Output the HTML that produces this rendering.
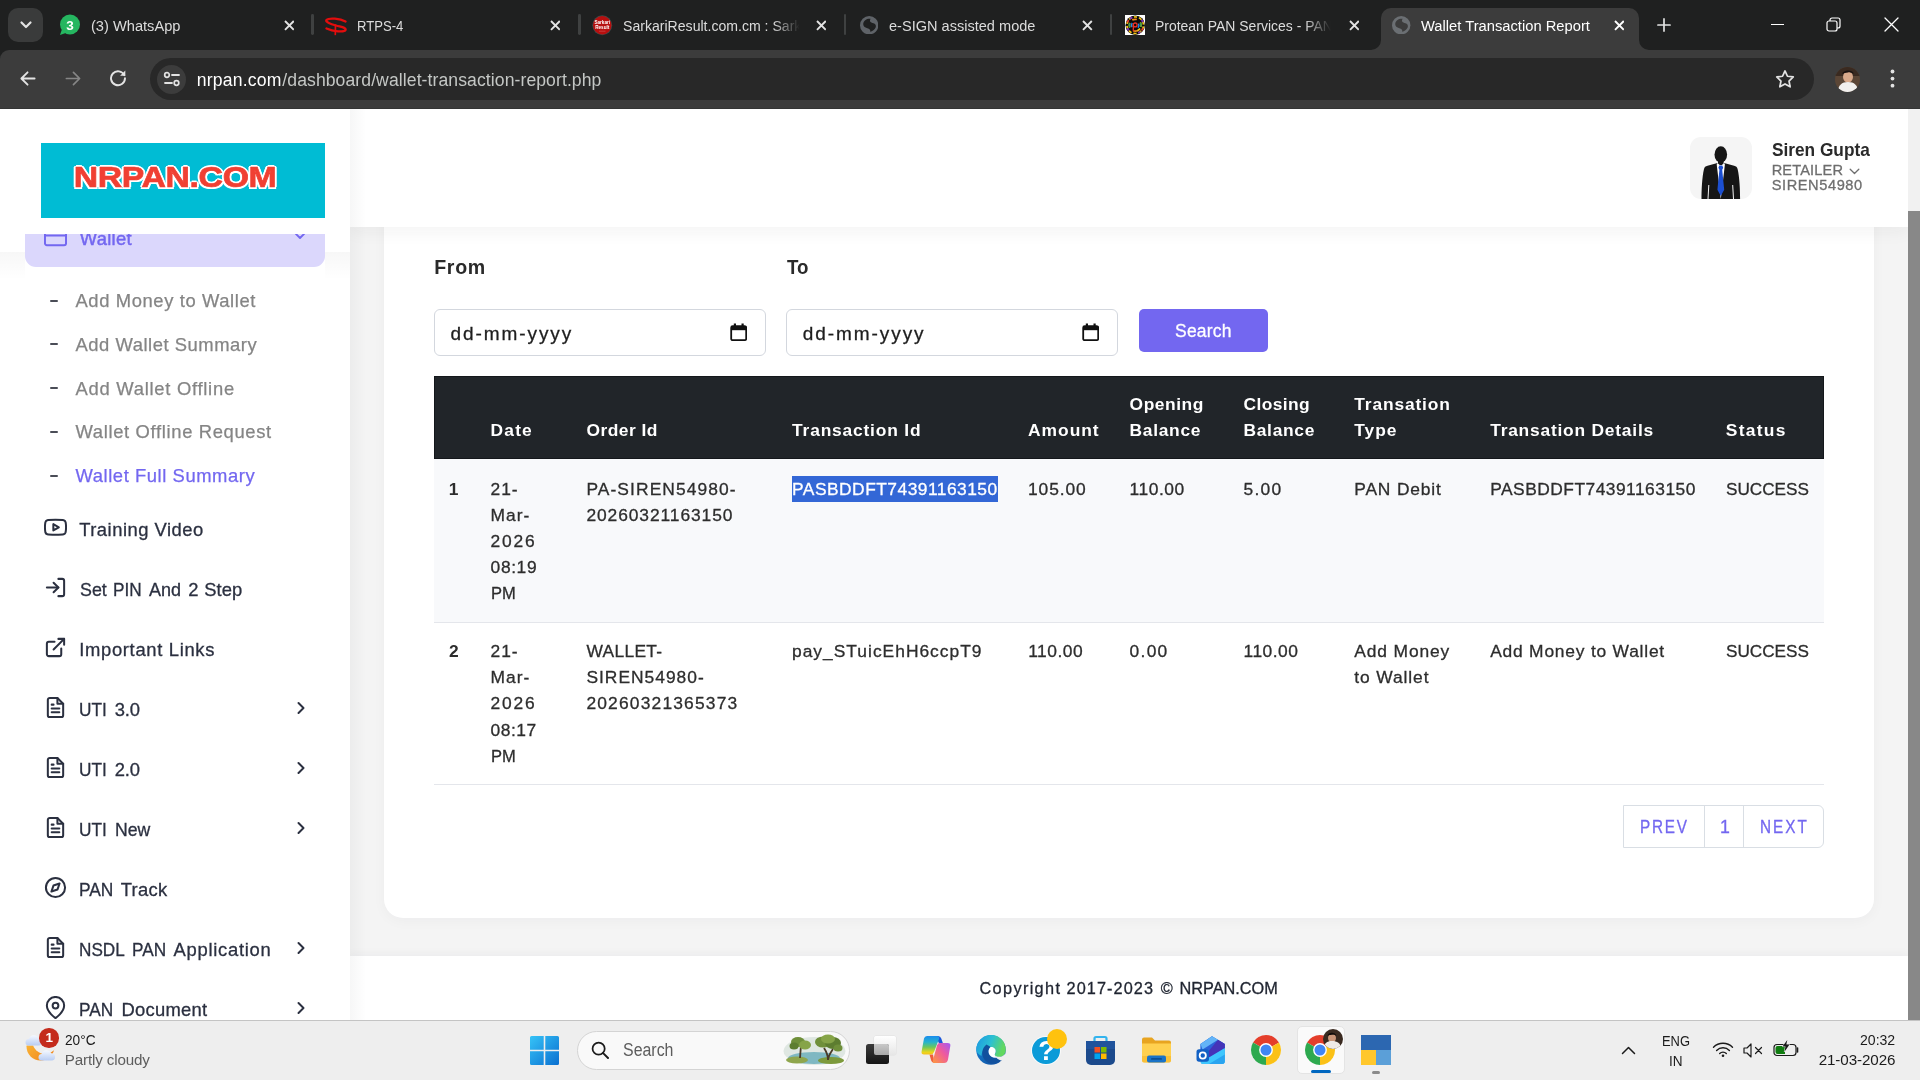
<!DOCTYPE html>
<html lang="en">
<head>
<meta charset="utf-8">
<title>Wallet Transaction Report</title>
<style>
*{box-sizing:border-box;margin:0;padding:0}
html,body{width:1920px;height:1080px;overflow:hidden;background:#fff;font-family:"Liberation Sans",sans-serif;}
.abs{position:absolute}
.tx{position:absolute;white-space:pre}
#root{position:relative;width:1920px;height:1080px;overflow:hidden;opacity:.999}
#tabstrip{left:0;top:0;width:1920px;height:50px;background:#1f2020;box-shadow:0 12px 0 #1f2020}
#toolbar{left:0;top:50px;width:1920px;height:59px;background:#3c3c3c;border-radius:9px 0 0 0;box-shadow:inset 0 -1px 0 #343535}
#page{left:0;top:109px;width:1908px;height:911px;background:#f4f4f4;overflow:hidden}
#sidebar{left:0;top:0;width:350px;height:911px;background:#fff;overflow:hidden}
#sbshadow{left:350px;top:0;width:16px;height:911px;background:linear-gradient(to right,rgba(34,41,47,.04),rgba(34,41,47,0))}
#header{left:350px;top:0;width:1558px;height:118px;background:#fff;box-shadow:0 5px 16px rgba(34,41,47,.05)}
#card{left:384px;top:100px;width:1490px;height:709px;background:#fff;border-radius:0 0 19px 19px;box-shadow:0 3px 14px rgba(34,41,47,.035)}
#footer{left:350px;top:847px;width:1558px;height:64px;background:#fff;box-shadow:0 -3px 8px rgba(34,41,47,.035)}
#scroll{left:1908px;top:109px;width:12px;height:911px;background:#f1f1f1}
#thumb{left:0;top:102px;width:12px;height:809px;background:#888}
#taskbar{left:0;top:1020px;width:1920px;height:60px;background:#eeeeee;box-shadow:inset 0 1px 0 #c4c4c4}
</style>
</head>
<body>
<div id="root">
<!-- ===== CHROME ===== -->
<div id="tabstrip" class="abs">
<div class="abs" style="left:8px;top:8px;width:35px;height:34px;background:#3a3b3b;border-radius:10px;"></div>
<svg class="abs" style="left:19px;top:20px;" width="14" height="10" viewBox="0 0 14 10"><path d="M2.500 2.500L7 7 11.500 2.500" stroke="#e3e3e3" stroke-width="2.200" fill="none" stroke-linecap="round" stroke-linejoin="round"/></svg>
<svg class="abs" style="left:59px;top:14px;" width="22" height="22" viewBox="0 0 22 22"><circle cx="11" cy="10.500" r="10" fill="#25b660"/><path d="M1 21l2.200-6.500 4.300 4.300z" fill="#25b660"/><text x="11" y="15.500" font-family="Liberation Sans,sans-serif" font-weight="bold" font-size="13.500" fill="#fff" text-anchor="middle">3</text></svg>
<div class="tx" style="left:90.50px;top:16px;font-size:15.4px;line-height:19px;letter-spacing:0.000px;color:#dcdcdc;transform:scaleX(0.9507);transform-origin:0 0;">(3) WhatsApp</div>
<svg class="abs" style="left:283.6px;top:19.9px;" width="10.8" height="10.8" viewBox="-5.4 -5.4 10.8 10.8"><path d="M-4.4 -4.4L4.4 4.4M4.4 -4.4L-4.4 4.4" stroke="#e3e3e3" stroke-width="1.9" stroke-linecap="butt" fill="none"/></svg>
<div class="abs" style="left:311.1px;top:14px;width:2.8px;height:21px;background:#3f4141;border-radius:1.4px;"></div>
<svg class="abs" style="left:325px;top:17px;" width="22" height="19" viewBox="0 0 22 19"><path d="M20.500 4.500C15 1.500 4 .5 1.500 3 0 5 6 7 11 8.500c5 1.500 10.500 2 9.500 4.500-1 2.500-12.500 1.500-19-1.500" fill="none" stroke="#e30d0d" stroke-width="2.300" stroke-linecap="round"/><path d="M10.500 8L10.300 17.500" stroke="#e30d0d" stroke-width="1.700" stroke-linecap="round"/></svg>
<div class="tx" style="left:356.50px;top:16px;font-size:15.4px;line-height:19px;letter-spacing:0.000px;color:#dcdcdc;transform:scaleX(0.8497);transform-origin:0 0;">RTPS-4</div>
<svg class="abs" style="left:549.6px;top:19.9px;" width="10.8" height="10.8" viewBox="-5.4 -5.4 10.8 10.8"><path d="M-4.4 -4.4L4.4 4.4M4.4 -4.4L-4.4 4.4" stroke="#e3e3e3" stroke-width="1.9" stroke-linecap="butt" fill="none"/></svg>
<div class="abs" style="left:578.1px;top:14px;width:2.8px;height:21px;background:#3f4141;border-radius:1.4px;"></div>
<svg class="abs" style="left:592px;top:15px;" width="20.5" height="20.5" viewBox="0 0 20.500 20.500"><circle cx="10.250" cy="10.250" r="9.900" fill="#3f4a4a"/><circle cx="10.250" cy="10.250" r="9.200" fill="#b70f0f"/><text x="10.250" y="9.300" font-family="Liberation Sans,sans-serif" font-weight="bold" font-size="4.600" fill="#fff" text-anchor="middle">Sarkari</text><text x="10.250" y="13.800" font-family="Liberation Sans,sans-serif" font-weight="bold" font-size="4.600" fill="#fff" text-anchor="middle">Result</text><path d="M7 16.200h6.500" stroke="#d46a6a" stroke-width=".5"/></svg>
<div class="tx" style="left:622.50px;top:16px;font-size:15.4px;line-height:19px;letter-spacing:0.000px;color:#dcdcdc;-webkit-mask-image:linear-gradient(to right,#000 84%,transparent 99%);mask-image:linear-gradient(to right,#000 84%,transparent 99%);transform:scaleX(0.9149);transform-origin:0 0;">SarkariResult.com.cm : Sark</div>
<svg class="abs" style="left:815.6px;top:19.9px;" width="10.8" height="10.8" viewBox="-5.4 -5.4 10.8 10.8"><path d="M-4.4 -4.4L4.4 4.4M4.4 -4.4L-4.4 4.4" stroke="#e3e3e3" stroke-width="1.9" stroke-linecap="butt" fill="none"/></svg>
<div class="abs" style="left:843.6px;top:14px;width:2.8px;height:21px;background:#3f4141;border-radius:1.4px;"></div>
<svg class="abs" style="left:859.5999999999999px;top:15.8px;" width="18.4" height="18.4" viewBox="-10 -10 20 20"><circle r="10" fill="#5f6368"/><path d="M-6.500 -1C-6.500 -5.500-2-7.500 1.500-7c-1.500 2.500-.5 4 2 4.500 3 .5 4.500 2.500 3.500 5C6 5 3.500 6.800 1 7c.8-2-.8-3.200-3-3.800C-4.800 2.500-6.500 1-6.500-1Z" fill="#1f2020"/></svg>
<div class="tx" style="left:888.50px;top:16px;font-size:15.4px;line-height:19px;letter-spacing:0.000px;color:#dcdcdc;transform:scaleX(0.9457);transform-origin:0 0;">e-SIGN assisted mode</div>
<svg class="abs" style="left:1082.1px;top:19.9px;" width="10.8" height="10.8" viewBox="-5.4 -5.4 10.8 10.8"><path d="M-4.4 -4.4L4.4 4.4M4.4 -4.4L-4.4 4.4" stroke="#e3e3e3" stroke-width="1.9" stroke-linecap="butt" fill="none"/></svg>
<div class="abs" style="left:1109.6px;top:14px;width:2.8px;height:21px;background:#3f4141;border-radius:1.4px;"></div>
<svg class="abs" style="left:1124.8px;top:14.7px;" width="20.4" height="20.4" viewBox="-10.200 -10.200 20.400 20.400"><rect x="-10.200" y="-10.200" width="20.400" height="20.400" fill="#fff"/><circle r="9.700" fill="#0a0a0a"/><circle r="8.300" fill="none" stroke="#f5c518" stroke-width="1.700" stroke-dasharray="3.200 2" transform="rotate(8)"/><circle r="8.300" fill="none" stroke="#7a2fbf" stroke-width="1.700" stroke-dasharray="2.600 10.440" transform="rotate(-40)"/><circle r="8.300" fill="none" stroke="#e8372c" stroke-width="1.700" stroke-dasharray="2.600 23.480" transform="rotate(200)"/><circle r="5.900" fill="none" stroke="#f58a1f" stroke-width="1.700" stroke-dasharray="4.600 4.670" transform="rotate(-120)"/><circle r="5.900" fill="none" stroke="#2fa84f" stroke-width="1.700" stroke-dasharray="4 14.530" transform="rotate(-25)"/><circle r="5.900" fill="none" stroke="#f5c518" stroke-width="1.700" stroke-dasharray="3.500 33.570" transform="rotate(35)"/><circle r="3.700" fill="none" stroke="#1d8fe8" stroke-width="1.500" stroke-dasharray="4.200 7.420" transform="rotate(150)"/><circle cx="0" cy="-.3" r="1.900" fill="none" stroke="#ee2f24" stroke-width="1.300"/><path d="M-1.900 -.3V5.500" stroke="#ee2f24" stroke-width="1.300" stroke-linecap="round"/></svg>
<div class="tx" style="left:1155.00px;top:16px;font-size:15.4px;line-height:19px;letter-spacing:0.000px;color:#dcdcdc;-webkit-mask-image:linear-gradient(to right,#000 84%,transparent 99%);mask-image:linear-gradient(to right,#000 84%,transparent 99%);transform:scaleX(0.9069);transform-origin:0 0;">Protean PAN Services - PAN</div>
<svg class="abs" style="left:1348.6px;top:19.9px;" width="10.8" height="10.8" viewBox="-5.4 -5.4 10.8 10.8"><path d="M-4.4 -4.4L4.4 4.4M4.4 -4.4L-4.4 4.4" stroke="#e3e3e3" stroke-width="1.9" stroke-linecap="butt" fill="none"/></svg>
<div class="abs" style="left:1381px;top:7.5px;width:257.5px;height:42.5px;background:#3c3c3c;border-radius:10px 10px 0 0;"></div>
<svg class="abs" style="left:1371px;top:40px;" width="10" height="10" viewBox="0 0 10 10"><path d="M10 0v10H0A10 10 0 0 0 10 0z" fill="#3c3c3c"/></svg>
<svg class="abs" style="left:1638.5px;top:40px;" width="10" height="10" viewBox="0 0 10 10"><path d="M0 0v10h10A10 10 0 0 1 0 0z" fill="#3c3c3c"/></svg>
<svg class="abs" style="left:1392.3px;top:15.8px;" width="18.4" height="18.4" viewBox="-10 -10 20 20"><circle r="10" fill="#6b6f73"/><path d="M-6.500 -1C-6.500 -5.500-2-7.500 1.500-7c-1.500 2.500-.5 4 2 4.500 3 .5 4.500 2.500 3.500 5C6 5 3.500 6.800 1 7c.8-2-.8-3.200-3-3.800C-4.800 2.500-6.500 1-6.500-1Z" fill="#3c3c3c"/></svg>
<div class="tx" style="left:1421.00px;top:16px;font-size:15.4px;line-height:19px;letter-spacing:0.000px;color:#ffffff;transform:scaleX(0.9569);transform-origin:0 0;">Wallet Transaction Report</div>
<svg class="abs" style="left:1613.6px;top:19.9px;" width="10.8" height="10.8" viewBox="-5.4 -5.4 10.8 10.8"><path d="M-4.4 -4.4L4.4 4.4M4.4 -4.4L-4.4 4.4" stroke="#ffffff" stroke-width="1.9" stroke-linecap="butt" fill="none"/></svg>
<svg class="abs" style="left:1656.5px;top:18px;" width="14" height="14" viewBox="0 0 15 15"><path d="M7.500 1v13M1 7.500h13" stroke="#e3e3e3" stroke-width="1.800" stroke-linecap="round"/></svg>
<div class="abs" style="left:1771px;top:23.5px;width:13px;height:1.3px;background:#ffffff;"></div>
<svg class="abs" style="left:1826px;top:17px;" width="15" height="15" viewBox="0 0 15 15"><rect x="1" y="4" width="10" height="10" rx="2" fill="none" stroke="#fff" stroke-width="1.200"/><path d="M4 4V3a2 2 0 0 1 2-2h6a2 2 0 0 1 2 2v6a2 2 0 0 1-2 2h-1" fill="none" stroke="#fff" stroke-width="1.200"/></svg>
<svg class="abs" style="left:1883.5px;top:17px;" width="15" height="15" viewBox="0 0 15 15"><path d="M1 1l13 13M14 1L1 14" stroke="#fff" stroke-width="1.300" stroke-linecap="round"/></svg>
</div>
<div id="toolbar" class="abs">
<svg class="abs" style="left:19.5px;top:21px;" width="16" height="15" viewBox="0 0 18 17"><path d="M16.500 8.500H2M8.500 1.500L1.500 8.500l7 7" fill="none" stroke="#e3e3e3" stroke-width="2.100" stroke-linecap="round" stroke-linejoin="round"/></svg>
<svg class="abs" style="left:64.5px;top:21px;" width="16" height="15" viewBox="0 0 18 17"><path d="M1.500 8.500H16M9.500 1.500l7 7-7 7" fill="none" stroke="#868686" stroke-width="1.900" stroke-linecap="round" stroke-linejoin="round"/></svg>
<svg class="abs" style="left:108.5px;top:19px;" width="18" height="18" viewBox="0 0 18 18"><path d="M15.300 6.200A7 7 0 1 0 16 9.300" fill="none" stroke="#e3e3e3" stroke-width="1.900" stroke-linecap="round"/><path d="M16.300 1.500v5.200h-5.200z" fill="#e3e3e3"/></svg>
<div class="abs" style="left:150px;top:8px;width:1663.5px;height:42px;background:#282828;border-radius:21px;"></div>
<div class="abs" style="left:156.5px;top:14.5px;width:29.5px;height:29.5px;background:#3c3c3c;border-radius:50%;"></div>
<svg class="abs" style="left:162.5px;top:21px;" width="18" height="16" viewBox="0 0 18 16"><circle cx="4" cy="4" r="2.300" fill="none" stroke="#e3e3e3" stroke-width="1.700"/><path d="M9 4h7" stroke="#e3e3e3" stroke-width="1.800" stroke-linecap="round"/><circle cx="13.500" cy="12" r="2.300" fill="none" stroke="#e3e3e3" stroke-width="1.700"/><path d="M2 12h7" stroke="#e3e3e3" stroke-width="1.800" stroke-linecap="round"/></svg>
</div>
<div class="tx" style="left:196.70px;top:69px;font-size:17.6px;line-height:22px;letter-spacing:0.206px;color:#ffffff;">nrpan.com</div>
<div class="tx" style="left:282.30px;top:69px;font-size:17.6px;line-height:22px;letter-spacing:0.082px;color:#c4c7c5;">/dashboard/wallet-transaction-report.php</div>
<svg class="abs" style="left:1774px;top:68px;" width="22" height="22" viewBox="0 0 24 24"><path d="M12 3.200l2.700 5.800 6.300.8-4.600 4.400 1.200 6.300L12 17.400l-5.600 3.100 1.200-6.300L3 9.800l6.300-.8z" fill="none" stroke="#e3e3e3" stroke-width="1.900" stroke-linejoin="round"/></svg>
<svg class="abs" style="left:1835px;top:66.5px;" width="25" height="25" viewBox="0 0 25 25"><defs><clipPath id="pc"><circle cx="12.500" cy="12.500" r="12.500"/></clipPath></defs><g clip-path="url(#pc)"><rect width="25" height="25" fill="#5b4636"/><rect x="0" y="0" width="25" height="9" fill="#3a2a20"/><ellipse cx="13" cy="10" rx="5" ry="5.500" fill="#d9a98a"/><path d="M7 7c1-4 10-5 12 0-1-1-4-2-6-1.500S8 6 7 7z" fill="#1a1210"/><path d="M3 25c0-7 4-10 10-10s10 3 10 10z" fill="#f2f0ee"/></g></svg>
<svg class="abs" style="left:1890px;top:69px;" width="5" height="20" viewBox="0 0 5 20"><circle cx="2.500" cy="2.500" r="1.900" fill="#e3e3e3"/><circle cx="2.500" cy="9.600" r="1.900" fill="#e3e3e3"/><circle cx="2.500" cy="16.700" r="1.900" fill="#e3e3e3"/></svg>
<!-- ===== PAGE ===== -->
<div id="page" class="abs">
<div id="card" class="abs">
</div>
<div class="tx" style="left:434.20px;top:146px;font-size:19.6px;line-height:24px;letter-spacing:0.700px;color:#2a2a2a;font-weight:bold;">From</div>
<div class="tx" style="left:787.40px;top:146px;font-size:19.6px;line-height:24px;letter-spacing:0.000px;color:#2a2a2a;font-weight:bold;transform:scaleX(0.9560);transform-origin:0 0;">To</div>
<div class="abs" style="left:434px;top:200px;width:332px;height:47px;background:#fff;border:1px solid #d3d7de;border-radius:6px;"></div>
<div class="tx" style="left:450.40px;top:213px;font-size:19px;line-height:23px;letter-spacing:1.940px;color:#1e1e1e;-webkit-text-stroke:.3px #1e1e1e;">dd-mm-yyyy</div>
<svg class="abs" style="left:729.5px;top:214.3px;" width="17.5" height="18.5" viewBox="0 0 17.5 18.5"><rect x="1.200" y="3.200" width="15" height="14" rx="1.500" fill="none" stroke="#111" stroke-width="1.800"/><rect x="1.200" y="3.200" width="15" height="4" fill="#111"/><rect x="3.800" y=".5" width="2.200" height="3.500" fill="#111"/><rect x="11.500" y=".5" width="2.200" height="3.500" fill="#111"/></svg>
<div class="abs" style="left:786.3px;top:200px;width:332px;height:47px;background:#fff;border:1px solid #d3d7de;border-radius:6px;"></div>
<div class="tx" style="left:802.70px;top:213px;font-size:19px;line-height:23px;letter-spacing:1.940px;color:#1e1e1e;-webkit-text-stroke:.3px #1e1e1e;">dd-mm-yyyy</div>
<svg class="abs" style="left:1081.8px;top:214.3px;" width="17.5" height="18.5" viewBox="0 0 17.5 18.5"><rect x="1.200" y="3.200" width="15" height="14" rx="1.500" fill="none" stroke="#111" stroke-width="1.800"/><rect x="1.200" y="3.200" width="15" height="4" fill="#111"/><rect x="3.800" y=".5" width="2.200" height="3.500" fill="#111"/><rect x="11.500" y=".5" width="2.200" height="3.500" fill="#111"/></svg>
<div class="abs" style="left:1139px;top:200px;width:129px;height:43px;background:#7367f0;border-radius:5px;"></div>
<div class="tx" style="left:1175.00px;top:211px;font-size:17.5px;line-height:22px;letter-spacing:0.210px;color:#ffffff;-webkit-text-stroke:.3px #ffffff;">Search</div>
<div class="abs" style="left:434px;top:267px;width:1390px;height:83px;background:#212529;box-shadow:inset 0 0 0 1px #14171b;"></div>
<div class="tx" style="left:490.60px;top:310px;font-size:17.4px;line-height:22px;letter-spacing:1.162px;color:#ffffff;font-weight:bold;">Date</div>
<div class="tx" style="left:586.40px;top:310px;font-size:17.4px;line-height:22px;letter-spacing:0.474px;color:#ffffff;font-weight:bold;">Order Id</div>
<div class="tx" style="left:792.10px;top:310px;font-size:17.4px;line-height:22px;letter-spacing:0.811px;color:#ffffff;font-weight:bold;">Transaction Id</div>
<div class="tx" style="left:1028.00px;top:310px;font-size:17.4px;line-height:22px;letter-spacing:0.996px;color:#ffffff;font-weight:bold;">Amount</div>
<div class="tx" style="left:1129.60px;top:284px;font-size:17.4px;line-height:22px;letter-spacing:0.523px;color:#ffffff;font-weight:bold;">Opening</div>
<div class="tx" style="left:1129.60px;top:310px;font-size:17.4px;line-height:22px;letter-spacing:0.694px;color:#ffffff;font-weight:bold;">Balance</div>
<div class="tx" style="left:1243.50px;top:284px;font-size:17.4px;line-height:22px;letter-spacing:0.384px;color:#ffffff;font-weight:bold;">Closing</div>
<div class="tx" style="left:1243.50px;top:310px;font-size:17.4px;line-height:22px;letter-spacing:0.694px;color:#ffffff;font-weight:bold;">Balance</div>
<div class="tx" style="left:1354.30px;top:284px;font-size:17.4px;line-height:22px;letter-spacing:0.846px;color:#ffffff;font-weight:bold;">Transation</div>
<div class="tx" style="left:1354.30px;top:310px;font-size:17.4px;line-height:22px;letter-spacing:0.960px;color:#ffffff;font-weight:bold;">Type</div>
<div class="tx" style="left:1490.20px;top:310px;font-size:17.4px;line-height:22px;letter-spacing:0.778px;color:#ffffff;font-weight:bold;">Transation Details</div>
<div class="tx" style="left:1725.80px;top:310px;font-size:17.4px;line-height:22px;letter-spacing:1.305px;color:#ffffff;font-weight:bold;">Status</div>
<div class="abs" style="left:434px;top:350px;width:1390px;height:163.5px;background:#f8f9fb;border-bottom:1px solid #e4e6eb;"></div>
<div class="abs" style="left:434px;top:675px;width:1390px;height:1px;background:#e4e6eb;"></div>
<div class="tx" style="left:448.80px;top:369px;font-size:17.4px;line-height:22px;letter-spacing:0.000px;color:#2d2d2d;font-weight:bold;">1</div>
<div class="tx" style="left:490.60px;top:369px;font-size:17.4px;line-height:22px;letter-spacing:0.876px;color:#2d2d2d;-webkit-text-stroke:.3px #2d2d2d;">21-</div>
<div class="tx" style="left:490.60px;top:395px;font-size:17.4px;line-height:22px;letter-spacing:0.947px;color:#2d2d2d;-webkit-text-stroke:.3px #2d2d2d;">Mar-</div>
<div class="tx" style="left:490.60px;top:421px;font-size:17.4px;line-height:22px;letter-spacing:1.764px;color:#2d2d2d;-webkit-text-stroke:.3px #2d2d2d;">2026</div>
<div class="tx" style="left:490.60px;top:447px;font-size:17.4px;line-height:22px;letter-spacing:0.614px;color:#2d2d2d;-webkit-text-stroke:.3px #2d2d2d;">08:19</div>
<div class="tx" style="left:490.60px;top:473px;font-size:17.4px;line-height:22px;letter-spacing:0.000px;color:#2d2d2d;-webkit-text-stroke:.3px #2d2d2d;transform:scaleX(0.9502);transform-origin:0 0;">PM</div>
<div class="tx" style="left:586.40px;top:369px;font-size:17.4px;line-height:22px;letter-spacing:1.095px;color:#2d2d2d;-webkit-text-stroke:.3px #2d2d2d;">PA-SIREN54980-</div>
<div class="tx" style="left:586.40px;top:395px;font-size:17.4px;line-height:22px;letter-spacing:0.916px;color:#2d2d2d;-webkit-text-stroke:.3px #2d2d2d;">20260321163150</div>
<div class="abs" style="left:791.8px;top:367px;width:206.2px;height:26px;background:#3367d6;"></div>
<div class="tx" style="left:792.10px;top:369px;font-size:17.4px;line-height:22px;letter-spacing:0.473px;color:#ffffff;-webkit-text-stroke:.3px #ffffff;">PASBDDFT74391163150</div>
<div class="tx" style="left:1028.00px;top:369px;font-size:17.4px;line-height:22px;letter-spacing:0.896px;color:#2d2d2d;-webkit-text-stroke:.3px #2d2d2d;">105.00</div>
<div class="tx" style="left:1129.60px;top:369px;font-size:17.4px;line-height:22px;letter-spacing:0.534px;color:#2d2d2d;-webkit-text-stroke:.3px #2d2d2d;">110.00</div>
<div class="tx" style="left:1243.50px;top:369px;font-size:17.4px;line-height:22px;letter-spacing:1.278px;color:#2d2d2d;-webkit-text-stroke:.3px #2d2d2d;">5.00</div>
<div class="tx" style="left:1354.30px;top:369px;font-size:17.4px;line-height:22px;letter-spacing:0.832px;color:#2d2d2d;-webkit-text-stroke:.3px #2d2d2d;">PAN Debit</div>
<div class="tx" style="left:1490.20px;top:369px;font-size:17.4px;line-height:22px;letter-spacing:0.479px;color:#2d2d2d;-webkit-text-stroke:.3px #2d2d2d;">PASBDDFT74391163150</div>
<div class="tx" style="left:1725.80px;top:369px;font-size:17.4px;line-height:22px;letter-spacing:0.000px;color:#2d2d2d;-webkit-text-stroke:.3px #2d2d2d;transform:scaleX(0.9867);transform-origin:0 0;">SUCCESS</div>
<div class="tx" style="left:449.00px;top:531px;font-size:17.4px;line-height:22px;letter-spacing:0.000px;color:#2d2d2d;font-weight:bold;">2</div>
<div class="tx" style="left:490.60px;top:531px;font-size:17.4px;line-height:22px;letter-spacing:0.876px;color:#2d2d2d;-webkit-text-stroke:.3px #2d2d2d;">21-</div>
<div class="tx" style="left:490.60px;top:557px;font-size:17.4px;line-height:22px;letter-spacing:0.947px;color:#2d2d2d;-webkit-text-stroke:.3px #2d2d2d;">Mar-</div>
<div class="tx" style="left:490.60px;top:583px;font-size:17.4px;line-height:22px;letter-spacing:1.764px;color:#2d2d2d;-webkit-text-stroke:.3px #2d2d2d;">2026</div>
<div class="tx" style="left:490.60px;top:610px;font-size:17.4px;line-height:22px;letter-spacing:0.489px;color:#2d2d2d;-webkit-text-stroke:.3px #2d2d2d;">08:17</div>
<div class="tx" style="left:490.60px;top:636px;font-size:17.4px;line-height:22px;letter-spacing:0.000px;color:#2d2d2d;-webkit-text-stroke:.3px #2d2d2d;transform:scaleX(0.9502);transform-origin:0 0;">PM</div>
<div class="tx" style="left:586.40px;top:531px;font-size:17.4px;line-height:22px;letter-spacing:0.332px;color:#2d2d2d;-webkit-text-stroke:.3px #2d2d2d;">WALLET-</div>
<div class="tx" style="left:586.40px;top:557px;font-size:17.4px;line-height:22px;letter-spacing:1.004px;color:#2d2d2d;-webkit-text-stroke:.3px #2d2d2d;">SIREN54980-</div>
<div class="tx" style="left:586.40px;top:583px;font-size:17.4px;line-height:22px;letter-spacing:1.186px;color:#2d2d2d;-webkit-text-stroke:.3px #2d2d2d;">20260321365373</div>
<div class="tx" style="left:792.00px;top:531px;font-size:17.4px;line-height:22px;letter-spacing:1.008px;color:#2d2d2d;-webkit-text-stroke:.3px #2d2d2d;">pay_STuicEhH6ccpT9</div>
<div class="tx" style="left:1028.20px;top:531px;font-size:17.4px;line-height:22px;letter-spacing:0.494px;color:#2d2d2d;-webkit-text-stroke:.3px #2d2d2d;">110.00</div>
<div class="tx" style="left:1129.60px;top:531px;font-size:17.4px;line-height:22px;letter-spacing:1.278px;color:#2d2d2d;-webkit-text-stroke:.3px #2d2d2d;">0.00</div>
<div class="tx" style="left:1243.50px;top:531px;font-size:17.4px;line-height:22px;letter-spacing:0.514px;color:#2d2d2d;-webkit-text-stroke:.3px #2d2d2d;">110.00</div>
<div class="tx" style="left:1354.30px;top:531px;font-size:17.4px;line-height:22px;letter-spacing:0.873px;color:#2d2d2d;-webkit-text-stroke:.3px #2d2d2d;">Add Money</div>
<div class="tx" style="left:1354.30px;top:557px;font-size:17.4px;line-height:22px;letter-spacing:0.895px;color:#2d2d2d;-webkit-text-stroke:.3px #2d2d2d;">to Wallet</div>
<div class="tx" style="left:1490.20px;top:531px;font-size:17.4px;line-height:22px;letter-spacing:0.789px;color:#2d2d2d;-webkit-text-stroke:.3px #2d2d2d;">Add Money to Wallet</div>
<div class="tx" style="left:1725.80px;top:531px;font-size:17.4px;line-height:22px;letter-spacing:0.000px;color:#2d2d2d;-webkit-text-stroke:.3px #2d2d2d;transform:scaleX(0.9867);transform-origin:0 0;">SUCCESS</div>
<div class="abs" style="left:1623px;top:696px;width:201px;height:43px;background:#fff;border:1px solid #d9dee4;border-radius:0 6px 6px 0;"></div>
<div class="abs" style="left:1704px;top:696px;width:1px;height:43px;background:#d9dee4;"></div>
<div class="abs" style="left:1743px;top:696px;width:1px;height:43px;background:#d9dee4;"></div>
<div class="tx" style="left:1640.40px;top:707px;font-size:17.8px;line-height:22px;letter-spacing:2.098px;color:#7367f0;-webkit-text-stroke:.3px #7367f0;transform:scaleX(0.8600);transform-origin:0 0;">PREV</div>
<div class="tx" style="left:1719.90px;top:707px;font-size:17.8px;line-height:22px;letter-spacing:0.000px;color:#7367f0;-webkit-text-stroke:.3px #7367f0;">1</div>
<div class="tx" style="left:1760.10px;top:707px;font-size:17.8px;line-height:22px;letter-spacing:2.393px;color:#7367f0;-webkit-text-stroke:.3px #7367f0;transform:scaleX(0.8600);transform-origin:0 0;">NEXT</div>
<div id="footer" class="abs"></div>
<div class="tx" style="left:979.50px;top:869px;font-size:16.3px;line-height:20px;color:#1f2430;-webkit-text-stroke:.3px #1f2430;"><span style="display:inline-block;vertical-align:top;letter-spacing:1.342px;width:82.57px;">Copyright</span> <span style="display:inline-block;vertical-align:top;letter-spacing:1.069px;width:89.67px;">2017-2023</span> <span style="display:inline-block;vertical-align:top;letter-spacing:0.000px;width:14.27px;">©</span> <span style="display:inline-block;vertical-align:top;letter-spacing:-0.013px;">NRPAN.COM</span></div>
<div id="header" class="abs"></div>
<div class="abs" style="left:1690px;top:28px;width:62px;height:62px;background:#f5f5f5;border-radius:11px;overflow:hidden;"><svg width="62" height="62" viewBox="0 0 62 62"><ellipse cx="30.800" cy="17.500" rx="6.300" ry="8.300" fill="#161616"/><rect x="28" y="22" width="5.600" height="6" fill="#161616"/><path d="M11.500 62c0-8 .5-22 2.500-30 .5-2 1.500-2.500 3.500-3.200L27.500 26l3.300 4 3.300-4 10 2.800c2 .7 3 1.200 3.500 3.200 2 8 2.500 22 2.500 30z" fill="#161616"/><path d="M27.500 26l3.300 3 3.300-3 .8 1.500-4.100 34.500-4.100-34.500z" fill="#fff"/><path d="M29.300 28.500h3l.9 2.200-1 2 2 20-3.400 6.300-3.400-6.300 2-20-1-2z" fill="#1c4fd1"/><path d="M18 62l.8-14M43.500 62l-.8-14" stroke="#f5f5f5" stroke-width="1"/></svg></div>
<div class="tx" style="left:1771.70px;top:30px;font-size:17.8px;line-height:22px;letter-spacing:0.000px;color:#2a2a2a;font-weight:bold;transform:scaleX(0.9704);transform-origin:0 0;">Siren Gupta</div>
<div class="tx" style="left:1771.70px;top:52px;font-size:14.6px;line-height:18px;letter-spacing:0.141px;color:#6e6e6e;-webkit-text-stroke:.3px #6e6e6e;">RETAILER</div>
<svg class="abs" style="left:1848.6px;top:59px;" width="11" height="7" viewBox="0 0 11 7"><path d="M1.200 1.200l4.300 4.300 4.300-4.300" fill="none" stroke="#6e6e6e" stroke-width="1.300" stroke-linecap="round" stroke-linejoin="round"/></svg>
<div class="tx" style="left:1771.70px;top:67px;font-size:14.6px;line-height:18px;letter-spacing:0.587px;color:#6e6e6e;-webkit-text-stroke:.3px #6e6e6e;">SIREN54980</div>
<div id="sbshadow" class="abs"></div>
<div id="sidebar" class="abs">
<div class="abs" style="left:25px;top:91px;width:300px;height:67px;background:#dbd7fc;border-radius:0 0 11px 11px;"></div>
<svg class="abs" style="left:44px;top:117.4px" width="23" height="23" viewBox="0 0 24 24" fill="none" stroke="#7367f0" stroke-width="2.1" stroke-linecap="round" stroke-linejoin="round"><rect x="1" y="4" width="22" height="16" rx="2" ry="2"/><line x1="1" y1="10" x2="23" y2="10"/></svg>
<div class="tx" style="left:79.70px;top:118px;font-size:18.4px;line-height:23px;letter-spacing:0.312px;color:#7367f0;-webkit-text-stroke:.45px #7367f0;">Wallet</div>
<svg class="abs" style="left:293.5px;top:123.30000000000001px;" width="12" height="8.3" viewBox="0 0 13 9"><path d="M1.500 1.500l5 5 5-5" fill="none" stroke="#7367f0" stroke-width="2" stroke-linecap="round" stroke-linejoin="round"/></svg>
<div class="abs" style="left:50px;top:190.60000000000002px;width:8px;height:2px;background:#4a4d57;border-radius:1px;"></div>
<div class="tx" style="left:75.50px;top:180px;font-size:18.4px;line-height:23px;letter-spacing:0.606px;color:#858585;-webkit-text-stroke:.25px #858585;">Add Money to Wallet</div>
<div class="abs" style="left:50px;top:234.40000000000003px;width:8px;height:2px;background:#4a4d57;border-radius:1px;"></div>
<div class="tx" style="left:75.50px;top:224px;font-size:18.4px;line-height:23px;letter-spacing:0.534px;color:#858585;-webkit-text-stroke:.25px #858585;">Add Wallet Summary</div>
<div class="abs" style="left:50px;top:278.1px;width:8px;height:2px;background:#4a4d57;border-radius:1px;"></div>
<div class="tx" style="left:75.50px;top:268px;font-size:18.4px;line-height:23px;letter-spacing:0.732px;color:#858585;-webkit-text-stroke:.25px #858585;">Add Wallet Offline</div>
<div class="abs" style="left:50px;top:321.8px;width:8px;height:2px;background:#4a4d57;border-radius:1px;"></div>
<div class="tx" style="left:75.50px;top:311px;font-size:18.4px;line-height:23px;letter-spacing:0.655px;color:#858585;-webkit-text-stroke:.25px #858585;">Wallet Offline Request</div>
<div class="abs" style="left:50px;top:365.6px;width:8px;height:2px;background:#4a4d57;border-radius:1px;"></div>
<div class="tx" style="left:75.50px;top:355px;font-size:18.4px;line-height:23px;letter-spacing:0.565px;color:#7367f0;-webkit-text-stroke:.25px #7367f0;">Wallet Full Summary</div>
<svg class="abs" style="left:44px;top:407.19999999999993px" width="23" height="23" viewBox="0 0 24 24" fill="none" stroke="#2b3040" stroke-width="2.1" stroke-linecap="round" stroke-linejoin="round"><path d="M22.540 6.420a2.780 2.780 0 0 0-1.940-2C18.880 4 12 4 12 4s-6.880 0-8.600.460a2.780 2.780 0 0 0-1.940 2A29 29 0 0 0 1 11.750a29 29 0 0 0 .460 5.330A2.780 2.780 0 0 0 3.400 19c1.720.460 8.600.460 8.600.460s6.880 0 8.600-.460a2.780 2.780 0 0 0 1.940-2 29 29 0 0 0 .460-5.250 29 29 0 0 0-.460-5.330z"/><polygon points="9.750 15.020 15.500 11.750 9.750 8.480 9.750 15.020"/></svg>
<div class="tx" style="left:79.20px;top:409px;font-size:18.4px;line-height:23px;letter-spacing:0.497px;color:#2b3040;-webkit-text-stroke:.3px #2b3040;">Training Video</div>
<svg class="abs" style="left:44px;top:467.19999999999993px" width="23" height="23" viewBox="0 0 24 24" fill="none" stroke="#2b3040" stroke-width="2.1" stroke-linecap="round" stroke-linejoin="round"><path d="M15 3h4a2 2 0 0 1 2 2v14a2 2 0 0 1-2 2h-4"/><polyline points="10 17 15 12 10 7"/><line x1="15" y1="12" x2="3" y2="12"/></svg>
<div class="tx" style="left:79.50px;top:469px;font-size:18.4px;line-height:23px;color:#2b3040;-webkit-text-stroke:.3px #2b3040;"><span style="display:inline-block;vertical-align:top;transform:scaleX(0.9704);transform-origin:0 0;width:28.69px;">Set</span> <span style="display:inline-block;vertical-align:top;transform:scaleX(0.9357);transform-origin:0 0;width:30.79px;">PIN</span> <span style="display:inline-block;vertical-align:top;transform:scaleX(0.9805);transform-origin:0 0;width:33.99px;">And</span> <span style="display:inline-block;vertical-align:top;letter-spacing:0.000px;width:10.79px;">2</span> <span style="display:inline-block;vertical-align:top;letter-spacing:0.050px;">Step</span></div>
<svg class="abs" style="left:44px;top:527.1999999999999px" width="23" height="23" viewBox="0 0 24 24" fill="none" stroke="#2b3040" stroke-width="2.1" stroke-linecap="round" stroke-linejoin="round"><path d="M18 13v6a2 2 0 0 1-2 2H5a2 2 0 0 1-2-2V8a2 2 0 0 1 2-2h6"/><polyline points="15 3 21 3 21 9"/><line x1="10" y1="14" x2="21" y2="3"/></svg>
<div class="tx" style="left:79.20px;top:529px;font-size:18.4px;line-height:23px;letter-spacing:0.679px;color:#2b3040;-webkit-text-stroke:.3px #2b3040;">Important Links</div>
<svg class="abs" style="left:44px;top:587.1999999999999px" width="23" height="23" viewBox="0 0 24 24" fill="none" stroke="#2b3040" stroke-width="2.1" stroke-linecap="round" stroke-linejoin="round"><path d="M14 2H6a2 2 0 0 0-2 2v16a2 2 0 0 0 2 2h12a2 2 0 0 0 2-2V8z"/><polyline points="14 2 14 8 20 8"/><line x1="16" y1="13" x2="8" y2="13"/><line x1="16" y1="17" x2="8" y2="17"/><polyline points="10 9 9 9 8 9"/></svg>
<div class="tx" style="left:79.20px;top:589px;font-size:18.4px;line-height:23px;color:#2b3040;-webkit-text-stroke:.3px #2b3040;"><span style="display:inline-block;vertical-align:top;transform:scaleX(0.9379);transform-origin:0 0;width:30.39px;">UTI</span> <span style="display:inline-block;vertical-align:top;letter-spacing:-0.139px;">3.0</span></div>
<svg class="abs" style="left:296px;top:592.3px;" width="11" height="14" viewBox="0 0 11 14"><path d="M2.500 2l5 5-5 5" fill="none" stroke="#2b3040" stroke-width="2" stroke-linecap="round" stroke-linejoin="round"/></svg>
<svg class="abs" style="left:44px;top:647.1999999999999px" width="23" height="23" viewBox="0 0 24 24" fill="none" stroke="#2b3040" stroke-width="2.1" stroke-linecap="round" stroke-linejoin="round"><path d="M14 2H6a2 2 0 0 0-2 2v16a2 2 0 0 0 2 2h12a2 2 0 0 0 2-2V8z"/><polyline points="14 2 14 8 20 8"/><line x1="16" y1="13" x2="8" y2="13"/><line x1="16" y1="17" x2="8" y2="17"/><polyline points="10 9 9 9 8 9"/></svg>
<div class="tx" style="left:79.20px;top:649px;font-size:18.4px;line-height:23px;color:#2b3040;-webkit-text-stroke:.3px #2b3040;"><span style="display:inline-block;vertical-align:top;transform:scaleX(0.9379);transform-origin:0 0;width:30.39px;">UTI</span> <span style="display:inline-block;vertical-align:top;letter-spacing:-0.139px;">2.0</span></div>
<svg class="abs" style="left:296px;top:652.3px;" width="11" height="14" viewBox="0 0 11 14"><path d="M2.500 2l5 5-5 5" fill="none" stroke="#2b3040" stroke-width="2" stroke-linecap="round" stroke-linejoin="round"/></svg>
<svg class="abs" style="left:44px;top:707.1999999999999px" width="23" height="23" viewBox="0 0 24 24" fill="none" stroke="#2b3040" stroke-width="2.1" stroke-linecap="round" stroke-linejoin="round"><path d="M14 2H6a2 2 0 0 0-2 2v16a2 2 0 0 0 2 2h12a2 2 0 0 0 2-2V8z"/><polyline points="14 2 14 8 20 8"/><line x1="16" y1="13" x2="8" y2="13"/><line x1="16" y1="17" x2="8" y2="17"/><polyline points="10 9 9 9 8 9"/></svg>
<div class="tx" style="left:79.20px;top:709px;font-size:18.4px;line-height:23px;color:#2b3040;-webkit-text-stroke:.3px #2b3040;"><span style="display:inline-block;vertical-align:top;transform:scaleX(0.9379);transform-origin:0 0;width:30.39px;">UTI</span> <span style="display:inline-block;vertical-align:top;transform:scaleX(0.9590);transform-origin:0 0;">New</span></div>
<svg class="abs" style="left:296px;top:712.3px;" width="11" height="14" viewBox="0 0 11 14"><path d="M2.500 2l5 5-5 5" fill="none" stroke="#2b3040" stroke-width="2" stroke-linecap="round" stroke-linejoin="round"/></svg>
<svg class="abs" style="left:44px;top:767.1999999999999px" width="23" height="23" viewBox="0 0 24 24" fill="none" stroke="#2b3040" stroke-width="2.1" stroke-linecap="round" stroke-linejoin="round"><circle cx="12" cy="12" r="10"/><polygon points="16.240 7.760 14.120 14.120 7.760 16.240 9.880 9.880 16.240 7.760"/></svg>
<div class="tx" style="left:79.40px;top:769px;font-size:18.4px;line-height:23px;color:#2b3040;-webkit-text-stroke:.3px #2b3040;"><span style="display:inline-block;vertical-align:top;transform:scaleX(0.9433);transform-origin:0 0;width:36.29px;">PAN</span> <span style="display:inline-block;vertical-align:top;letter-spacing:0.271px;">Track</span></div>
<svg class="abs" style="left:44px;top:827.1999999999999px" width="23" height="23" viewBox="0 0 24 24" fill="none" stroke="#2b3040" stroke-width="2.1" stroke-linecap="round" stroke-linejoin="round"><path d="M14 2H6a2 2 0 0 0-2 2v16a2 2 0 0 0 2 2h12a2 2 0 0 0 2-2V8z"/><polyline points="14 2 14 8 20 8"/><line x1="16" y1="13" x2="8" y2="13"/><line x1="16" y1="17" x2="8" y2="17"/><polyline points="10 9 9 9 8 9"/></svg>
<div class="tx" style="left:79.40px;top:829px;font-size:18.4px;line-height:23px;color:#2b3040;-webkit-text-stroke:.3px #2b3040;"><span style="display:inline-block;vertical-align:top;transform:scaleX(0.9331);transform-origin:0 0;width:47.69px;">NSDL</span> <span style="display:inline-block;vertical-align:top;transform:scaleX(0.9351);transform-origin:0 0;width:36.29px;">PAN</span> <span style="display:inline-block;vertical-align:top;letter-spacing:0.718px;">Application</span></div>
<svg class="abs" style="left:296px;top:832.3px;" width="11" height="14" viewBox="0 0 11 14"><path d="M2.500 2l5 5-5 5" fill="none" stroke="#2b3040" stroke-width="2" stroke-linecap="round" stroke-linejoin="round"/></svg>
<svg class="abs" style="left:44px;top:887.1999999999999px" width="23" height="23" viewBox="0 0 24 24" fill="none" stroke="#2b3040" stroke-width="2.1" stroke-linecap="round" stroke-linejoin="round"><path d="M21 10c0 7-9 13-9 13s-9-6-9-13a9 9 0 0 1 18 0z"/><circle cx="12" cy="10" r="3"/></svg>
<div class="tx" style="left:79.40px;top:889px;font-size:18.4px;line-height:23px;color:#2b3040;-webkit-text-stroke:.3px #2b3040;"><span style="display:inline-block;vertical-align:top;transform:scaleX(0.9378);transform-origin:0 0;width:37.09px;">PAN</span> <span style="display:inline-block;vertical-align:top;letter-spacing:0.248px;">Document</span></div>
<svg class="abs" style="left:296px;top:892.3px;" width="11" height="14" viewBox="0 0 11 14"><path d="M2.500 2l5 5-5 5" fill="none" stroke="#2b3040" stroke-width="2" stroke-linecap="round" stroke-linejoin="round"/></svg>
<div class="abs" style="left:0px;top:0px;width:350px;height:125px;background:#ffffff;box-shadow:0 6px 14px 2px rgba(255,255,255,0);"></div>
<div class="abs" style="left:0px;top:143px;width:25px;height:28px;background:linear-gradient(to bottom,rgba(0,0,0,.03),rgba(0,0,0,0));"></div>
<div class="abs" style="left:325px;top:143px;width:25px;height:28px;background:linear-gradient(to bottom,rgba(0,0,0,.03),rgba(0,0,0,0));"></div>
<div class="abs" style="left:41px;top:34px;width:284px;height:75px;background:#00bcd4;"></div>
<div class="abs" style="left:41px;top:34px;width:284px;height:75px;text-align:center;padding-right:16px;font-weight:bold;font-size:30px;line-height:67px;color:#f04033;letter-spacing:-.3px;-webkit-text-stroke:.7px #f04033;text-shadow:-1.5px -1.5px 0 #fff,1.5px -1.5px 0 #fff,-1.5px 1.5px 0 #fff,1.5px 1.5px 0 #fff,0 2px 0 #fff,0 -2px 0 #fff,2px 0 0 #fff,-2px 0 0 #fff;"><span style="display:inline-block;transform:scaleX(1.125);">NRPAN.COM</span></div>
</div>
</div>
<div id="scroll" class="abs"><div id="thumb" class="abs"></div></div>
<!-- ===== TASKBAR ===== -->
<div id="taskbar" class="abs">
<svg class="abs" style="left:22px;top:10px;" width="38" height="36" viewBox="0 0 38 36"><defs><linearGradient id="cl" x1="0" y1="0" x2="0" y2="1"><stop offset="0" stop-color="#f4f8ff"/><stop offset="1" stop-color="#b9cdf3"/></linearGradient><linearGradient id="mn" x1="0" y1="0" x2="1" y2="1"><stop offset="0" stop-color="#fcc23c"/><stop offset="1" stop-color="#ef7f1a"/></linearGradient></defs><mask id="mm"><rect x="0" y="15.500" width="38" height="21" fill="#fff"/><circle cx="23" cy="11.500" r="12.500" fill="#000"/></mask><circle cx="18.500" cy="16.500" r="14" fill="url(#mn)" mask="url(#mm)"/><path d="M6 15.500a3.300 3.300 0 0 1 .8-6.500 5.200 5.200 0 0 1 9.800-.5 3.600 3.600 0 0 1 .6 7z" fill="url(#cl)"/><path d="M19 30.500a3.300 3.300 0 0 1 .6-6.500 5.200 5.200 0 0 1 9.600-.8 3.700 3.700 0 0 1 1 7.300z" fill="url(#cl)"/></svg>
<div class="abs" style="left:39px;top:8px;width:19.5px;height:19.5px;background:#c42b1c;border-radius:50%;"></div>
<div class="tx" style="left:45.60px;top:9px;font-size:13.5px;line-height:17px;letter-spacing:0.000px;color:#ffffff;font-weight:bold;">1</div>
<div class="tx" style="left:64.70px;top:10px;font-size:15.2px;line-height:19px;letter-spacing:0.000px;color:#1b1b1b;transform:scaleX(0.9010);transform-origin:0 0;">20°C</div>
<div class="tx" style="left:64.70px;top:30px;font-size:15.2px;line-height:19px;letter-spacing:-0.143px;color:#5d5d5d;">Partly cloudy</div>
<svg class="abs" style="left:530px;top:16px;" width="29" height="29" viewBox="0 0 29 29"><defs><linearGradient id="wl" x1="0" y1="0" x2="1" y2="1"><stop offset="0" stop-color="#36c3f7"/><stop offset="1" stop-color="#0a6fd0"/></linearGradient></defs><path d="M0 1.500A1.500 1.500 0 0 1 1.500 0H13.700V13.700H0zM15.300 0H27.500A1.500 1.500 0 0 1 29 1.500V13.700H15.300zM0 15.300H13.700V29H1.500A1.500 1.500 0 0 1 0 27.500zM15.300 15.300H29V27.500A1.500 1.500 0 0 1 27.500 29H15.300z" fill="url(#wl)"/></svg>
<div class="abs" style="left:576.5px;top:11px;width:273.5px;height:38.5px;background:#f9f9f9;border:1px solid #d4d4d4;border-radius:20px;"></div>
<svg class="abs" style="left:591.3px;top:20.799999999999955px;" width="18.4" height="18.4" viewBox="0 0 20 20"><circle cx="8.300" cy="8.300" r="6.600" fill="none" stroke="#1b1b1b" stroke-width="1.900"/><path d="M13.200 13.200l5.300 5.300" stroke="#1b1b1b" stroke-width="2.100" stroke-linecap="round"/></svg>
<div class="tx" style="left:622.50px;top:19px;font-size:17.6px;line-height:22px;letter-spacing:0.000px;color:#5d5d5d;transform:scaleX(0.9056);transform-origin:0 0;">Search</div>
<svg class="abs" style="left:783px;top:14px;" width="63" height="32" viewBox="0 0 63 32"><ellipse cx="31.500" cy="17" rx="31" ry="14" fill="#dfe7e2"/><ellipse cx="31" cy="24" rx="26" ry="6" fill="#7fb8c2"/><ellipse cx="14" cy="26" rx="11" ry="3.500" fill="#8fa64d"/><ellipse cx="48" cy="26.500" rx="13" ry="3.500" fill="#7d9a3c"/><path d="M17 24l1-13M45 26c0-5-2-9-4-12M45 26c.5-5 3-8 5-11" stroke="#4a3a28" stroke-width="1.800" fill="none"/><ellipse cx="15" cy="8" rx="7" ry="5" fill="#6f8f3a"/><ellipse cx="22" cy="11" rx="6" ry="4.500" fill="#86a448"/><ellipse cx="11" cy="12" rx="4.500" ry="3.500" fill="#5d7d30"/><ellipse cx="40" cy="8" rx="8" ry="5.500" fill="#6f8f3a"/><ellipse cx="50" cy="9" rx="8" ry="6" fill="#5d7d30"/><ellipse cx="45" cy="5" rx="7" ry="4.500" fill="#86a448"/><ellipse cx="55" cy="14" rx="4.500" ry="3.500" fill="#6f8f3a"/></svg>
<div class="abs" style="left:873.5px;top:15.799999999999955px;width:22.3px;height:19.6px;background:linear-gradient(to bottom,#ffffff,#e6e6e6);border-radius:2px;box-shadow:0 0 0 .5px rgba(0,0,0,.06);"></div>
<div class="abs" style="left:865.8px;top:23.700000000000045px;width:23px;height:20px;background:linear-gradient(to bottom,#3b3b3b,#141414);border-radius:2.5px;"></div>
<div class="abs" style="left:873.5px;top:23.700000000000045px;width:15.3px;height:11.7px;background:linear-gradient(to bottom,#c9c9c9,#a9a9a9);border-radius:0 2px 0 2px;"></div>
<svg class="abs" style="left:921px;top:15px;" width="30" height="30" viewBox="0 0 30 30"><defs><linearGradient id="cpa" x1="0" y1="0" x2="0" y2="1"><stop offset="0" stop-color="#1b8ced"/><stop offset=".33" stop-color="#25b3cf"/><stop offset=".6" stop-color="#6cc75c"/><stop offset=".88" stop-color="#ecd51c"/><stop offset="1" stop-color="#f5c01c"/></linearGradient><linearGradient id="cpb" x1="1" y1="0" x2="0" y2="1"><stop offset="0" stop-color="#a259f7"/><stop offset=".45" stop-color="#ef5a9d"/><stop offset="1" stop-color="#fd9a3e"/></linearGradient></defs><path d="M14 1H17Q19.500 1 20.300 3.500L22 8.500H18L16 3.500Q15.500 1.500 14 1Z" fill="#1a56db"/><path d="M8.500 19.500L10 25Q10.800 28 14 28H16Q13.500 27.500 13 25L12 19.500Z" fill="#f0603c"/><path d="M6 1H16Q19 1 18 4L13 17Q12 19.500 9.500 19.500H3Q0 19.500 .6 16.500L3 3.500Q3.600 1 6 1Z" fill="url(#cpa)"/><path d="M18.500 8H26.500Q30 8 29.300 11L27 24.500Q26.300 28 23 28H14Q11 28 12 25L16 10.500Q16.700 8 18.500 8Z" fill="url(#cpb)"/></svg>
<svg class="abs" style="left:976px;top:15px;" width="30" height="30" viewBox="0 0 30 30"><defs><linearGradient id="eg1" x1="0" y1="0" x2=".6" y2="1"><stop offset="0" stop-color="#1390e0"/><stop offset="1" stop-color="#1457a8"/></linearGradient><linearGradient id="eg2" x1="0" y1="0" x2="1" y2=".3"><stop offset="0" stop-color="#1b97e3"/><stop offset=".55" stop-color="#2cc0d2"/><stop offset="1" stop-color="#62d85f"/></linearGradient></defs><circle cx="15" cy="15" r="14.700" fill="url(#eg1)"/><path d="M.3 15A14.700 14.700 0 0 1 29.700 14C30 19 27 22 22.500 22 19.500 22 18 20.500 19 19 20.500 16.500 19 12 14.500 12 9 12 5.500 16 5.500 21 2 19 .3 17 .3 15Z" fill="url(#eg2)"/><path d="M10.500 9.500C6 13 5 19 8 24c3 5 10 6 15 3 3-1.800 4.500-4 5-5.500-3 2.500-8 3-11.500 1C12 20 11.500 14.500 14.500 12 12.500 10.500 11.500 10 10.500 9.500Z" fill="#12519e"/><path d="M14.500 12c3.500-.5 6 2.500 5 5.500-.4 1.200-1 2-.5 3 .5 1 2 1.500 3.500 1.500-3.500 1.500-8 .5-9.500-3-1-2.500-.5-5.500 1.500-7Z" fill="#ffffff"/><path d="M19 20.500c2 2 7 2 10-1.500l1 5-5 1.500c-2.500-.5-5-2.500-6-5Z" fill="#eeeeee"/></svg>
<div class="abs" style="left:1032px;top:16.5px;width:27.5px;height:27.5px;background:#0c9bd8;border-radius:50%;box-shadow:0 0 0 1px rgba(255,255,255,.7);"></div>
<div class="tx" style="left:1038.30px;top:15px;font-size:27px;line-height:32px;letter-spacing:0.000px;color:#ffffff;font-weight:bold;">?</div>
<div class="abs" style="left:1047.3px;top:9px;width:20px;height:20px;background:#ffc20e;border-radius:50%;"></div>
<svg class="abs" style="left:1085px;top:15px;" width="31" height="31" viewBox="0 0 31 31"><path d="M9.500 6.500V3.500a1.500 1.500 0 0 1 1.500-1.500h9a1.500 1.500 0 0 1 1.500 1.500v3" fill="none" stroke="#33b4ee" stroke-width="2.200"/><path d="M1 6h29v19a5 5 0 0 1-5 5H6a5 5 0 0 1-5-5z" fill="#1c4a8c"/><path d="M1 6h29v8H1z" fill="#235aa6" opacity=".6"/><rect x="9.500" y="12" width="5.500" height="5.500" fill="#f25022"/><rect x="16" y="12" width="5.500" height="5.500" fill="#7fba00"/><rect x="9.500" y="18.500" width="5.500" height="5.500" fill="#00a4ef"/><rect x="16" y="18.500" width="5.500" height="5.500" fill="#ffb900"/></svg>
<svg class="abs" style="left:1140.5px;top:16px;" width="31" height="28" viewBox="0 0 31 28"><path d="M1 3.500A2 2 0 0 1 3 1.500h8l3 3h14a2 2 0 0 1 2 2V9H1z" fill="#e8a420"/><path d="M1 7.500h29v17a2 2 0 0 1-2 2H3a2 2 0 0 1-2-2z" fill="#ffd04f"/><path d="M1 20h29v4.500a2 2 0 0 1-2 2H3a2 2 0 0 1-2-2z" fill="#f7b92f" opacity=".7"/><rect x="6" y="19.500" width="19" height="7" rx="2" fill="#1a73c7"/><rect x="10" y="22" width="11" height="1.800" rx=".9" fill="#0d4f94"/></svg>
<svg class="abs" style="left:1195.5px;top:15px;" width="30" height="30" viewBox="0 0 30 30"><defs><linearGradient id="ol1" x1="0" y1="0" x2="1" y2="1"><stop offset="0" stop-color="#5cc8fb"/><stop offset="1" stop-color="#1e88e5"/></linearGradient></defs><path d="M16 1.200L28.800 9V26a3 3 0 0 1-3 3H7.500a3 3 0 0 1-3-3V9Z" fill="url(#ol1)"/><path d="M16 1.200L28.800 9v4.500L11 24.500 4.500 20V9Z" fill="#2b62d9"/><path d="M22 4.800L28.800 9v4.500L13 23.200 9 20.500Z" fill="#4534b8"/><path d="M16 1.200l6 3.600L6.500 14.500 4.500 9Z" fill="#63b4f7"/><path d="M4.500 27.500L28.800 13V26a3 3 0 0 1-3 3H7.500a3 3 0 0 1-3-1.500Z" fill="#3ec6fd"/><path d="M13 29l15.800-9.500V26a3 3 0 0 1-3 3Z" fill="#2aa4f0"/><rect x=".5" y="14.200" width="12.500" height="12.500" rx="2.600" fill="#1160c4"/><circle cx="6.750" cy="20.450" r="3.100" fill="none" stroke="#fff" stroke-width="1.800"/></svg>
<svg class="abs" style="left:1250.5px;top:15px;" width="30" height="30" viewBox="0 0 30 30"><circle cx="15" cy="15" r="15" fill="#fff"/><path d="M15 15L2.010 7.500A15 15 0 0 1 27.990 7.500z" fill="#e43e2b"/><path d="M15 15L27.990 7.500A15 15 0 0 1 15 30z" fill="#fbc116"/><path d="M15 15L15 30A15 15 0 0 1 2.010 7.500z" fill="#2da94f"/><path d="M15 8.200h12.600" stroke="#e43e2b" stroke-width="0"/><circle cx="15" cy="15" r="6.900" fill="#fff"/><circle cx="15" cy="15" r="5.500" fill="#4086f4"/></svg>
<div class="abs" style="left:1297px;top:5.5px;width:48px;height:48.5px;background:#fafafa;border-radius:5px;border:1px solid #e4e4e4;"></div>
<svg class="abs" style="left:1305px;top:15px;" width="30" height="30" viewBox="0 0 30 30"><circle cx="15" cy="15" r="15" fill="#fff"/><path d="M15 15L2.010 7.500A15 15 0 0 1 27.990 7.500z" fill="#e43e2b"/><path d="M15 15L27.990 7.500A15 15 0 0 1 15 30z" fill="#fbc116"/><path d="M15 15L15 30A15 15 0 0 1 2.010 7.500z" fill="#2da94f"/><path d="M15 8.200h12.600" stroke="#e43e2b" stroke-width="0"/><circle cx="15" cy="15" r="6.900" fill="#fff"/><circle cx="15" cy="15" r="5.500" fill="#4086f4"/></svg>
<svg class="abs" style="left:1322.5px;top:8.5px;" width="20" height="20" viewBox="0 0 20 20"><defs><clipPath id="pc2"><circle cx="10" cy="10" r="10"/></clipPath></defs><g clip-path="url(#pc2)"><rect width="20" height="20" fill="#3a2a20"/><ellipse cx="9" cy="9" rx="4" ry="4.500" fill="#c99578"/><path d="M4.500 7c.5-4 8-4.500 9 0-1-1-3-1.500-4.500-1.200S5.500 6 4.500 7z" fill="#120c0a"/><path d="M1 20c0-6 3-8 8-8s9 2 9 8z" fill="#efeae6"/></g></svg>
<div class="abs" style="left:1311px;top:50px;width:20px;height:3px;background:#0067c0;border-radius:2px;"></div>
<div class="abs" style="left:1360.5px;top:15px;width:30.5px;height:14.5px;background:#2c67b1;"></div>
<div class="abs" style="left:1360.5px;top:29.5px;width:15.2px;height:15.5px;background:#ffc72c;"></div>
<div class="abs" style="left:1375.7px;top:29.5px;width:15.3px;height:15.5px;background:#5b9fd8;"></div>
<div class="abs" style="left:1372px;top:50.5px;width:8px;height:3px;background:#8a8a8a;border-radius:2px;"></div>
<svg class="abs" style="left:1620.5px;top:24.5px;" width="15" height="10" viewBox="0 0 15 10"><path d="M1.500 8.500l6-6 6 6" fill="none" stroke="#1b1b1b" stroke-width="1.500" stroke-linecap="round" stroke-linejoin="round"/></svg>
<div class="tx" style="left:1662.00px;top:11px;font-size:15.2px;line-height:19px;letter-spacing:0.000px;color:#1b1b1b;transform:scaleX(0.8501);transform-origin:0 0;">ENG</div>
<div class="tx" style="left:1669.20px;top:31px;font-size:15.2px;line-height:19px;letter-spacing:0.000px;color:#1b1b1b;transform:scaleX(0.8947);transform-origin:0 0;">IN</div>
<svg class="abs" style="left:1712px;top:21px;" width="22" height="17" viewBox="0 0 22 17"><path d="M1.500 6.200a13.500 13.500 0 0 1 19 0M4.600 9.400a9 9 0 0 1 12.800 0M7.700 12.500a4.600 4.600 0 0 1 6.600 0" fill="none" stroke="#1b1b1b" stroke-width="1.400" stroke-linecap="round"/><circle cx="11" cy="14.800" r="1.300" fill="#1b1b1b"/></svg>
<svg class="abs" style="left:1742.5px;top:22.5px;" width="20" height="15" viewBox="0 0 20 15"><path d="M1 5h3l4-4v13l-4-4H1z" fill="none" stroke="#1b1b1b" stroke-width="1.200" stroke-linejoin="round"/><path d="M12.500 4.500l6 6M18.500 4.500l-6 6" stroke="#1b1b1b" stroke-width="1.200" stroke-linecap="round"/></svg>
<svg class="abs" style="left:1772.5px;top:20px;" width="27" height="17" viewBox="0 0 27 17"><rect x="1" y="4.500" width="22" height="11" rx="3" fill="none" stroke="#1b1b1b" stroke-width="1.200"/><path d="M24.500 8v4" stroke="#1b1b1b" stroke-width="1.600" stroke-linecap="round"/><path d="M2.500 8a2 2 0 0 1 2-2h7.500v8H4.500a2 2 0 0 1-2-2z" fill="#107c10"/><path d="M14.300 0l-4.800 6.600h3l-1.200 5.400 5.200-7.400h-3.200z" fill="#1b1b1b" stroke="#eeeeee" stroke-width="1" paint-order="stroke"/></svg>
<div class="tx" style="left:1860.30px;top:10px;font-size:15.2px;line-height:19px;letter-spacing:0.000px;color:#1b1b1b;transform:scaleX(0.9254);transform-origin:0 0;">20:32</div>
<div class="tx" style="left:1818.70px;top:30px;font-size:15.2px;line-height:19px;letter-spacing:-0.106px;color:#1b1b1b;">21-03-2026</div>
</div>
</div>
</body>
</html>
